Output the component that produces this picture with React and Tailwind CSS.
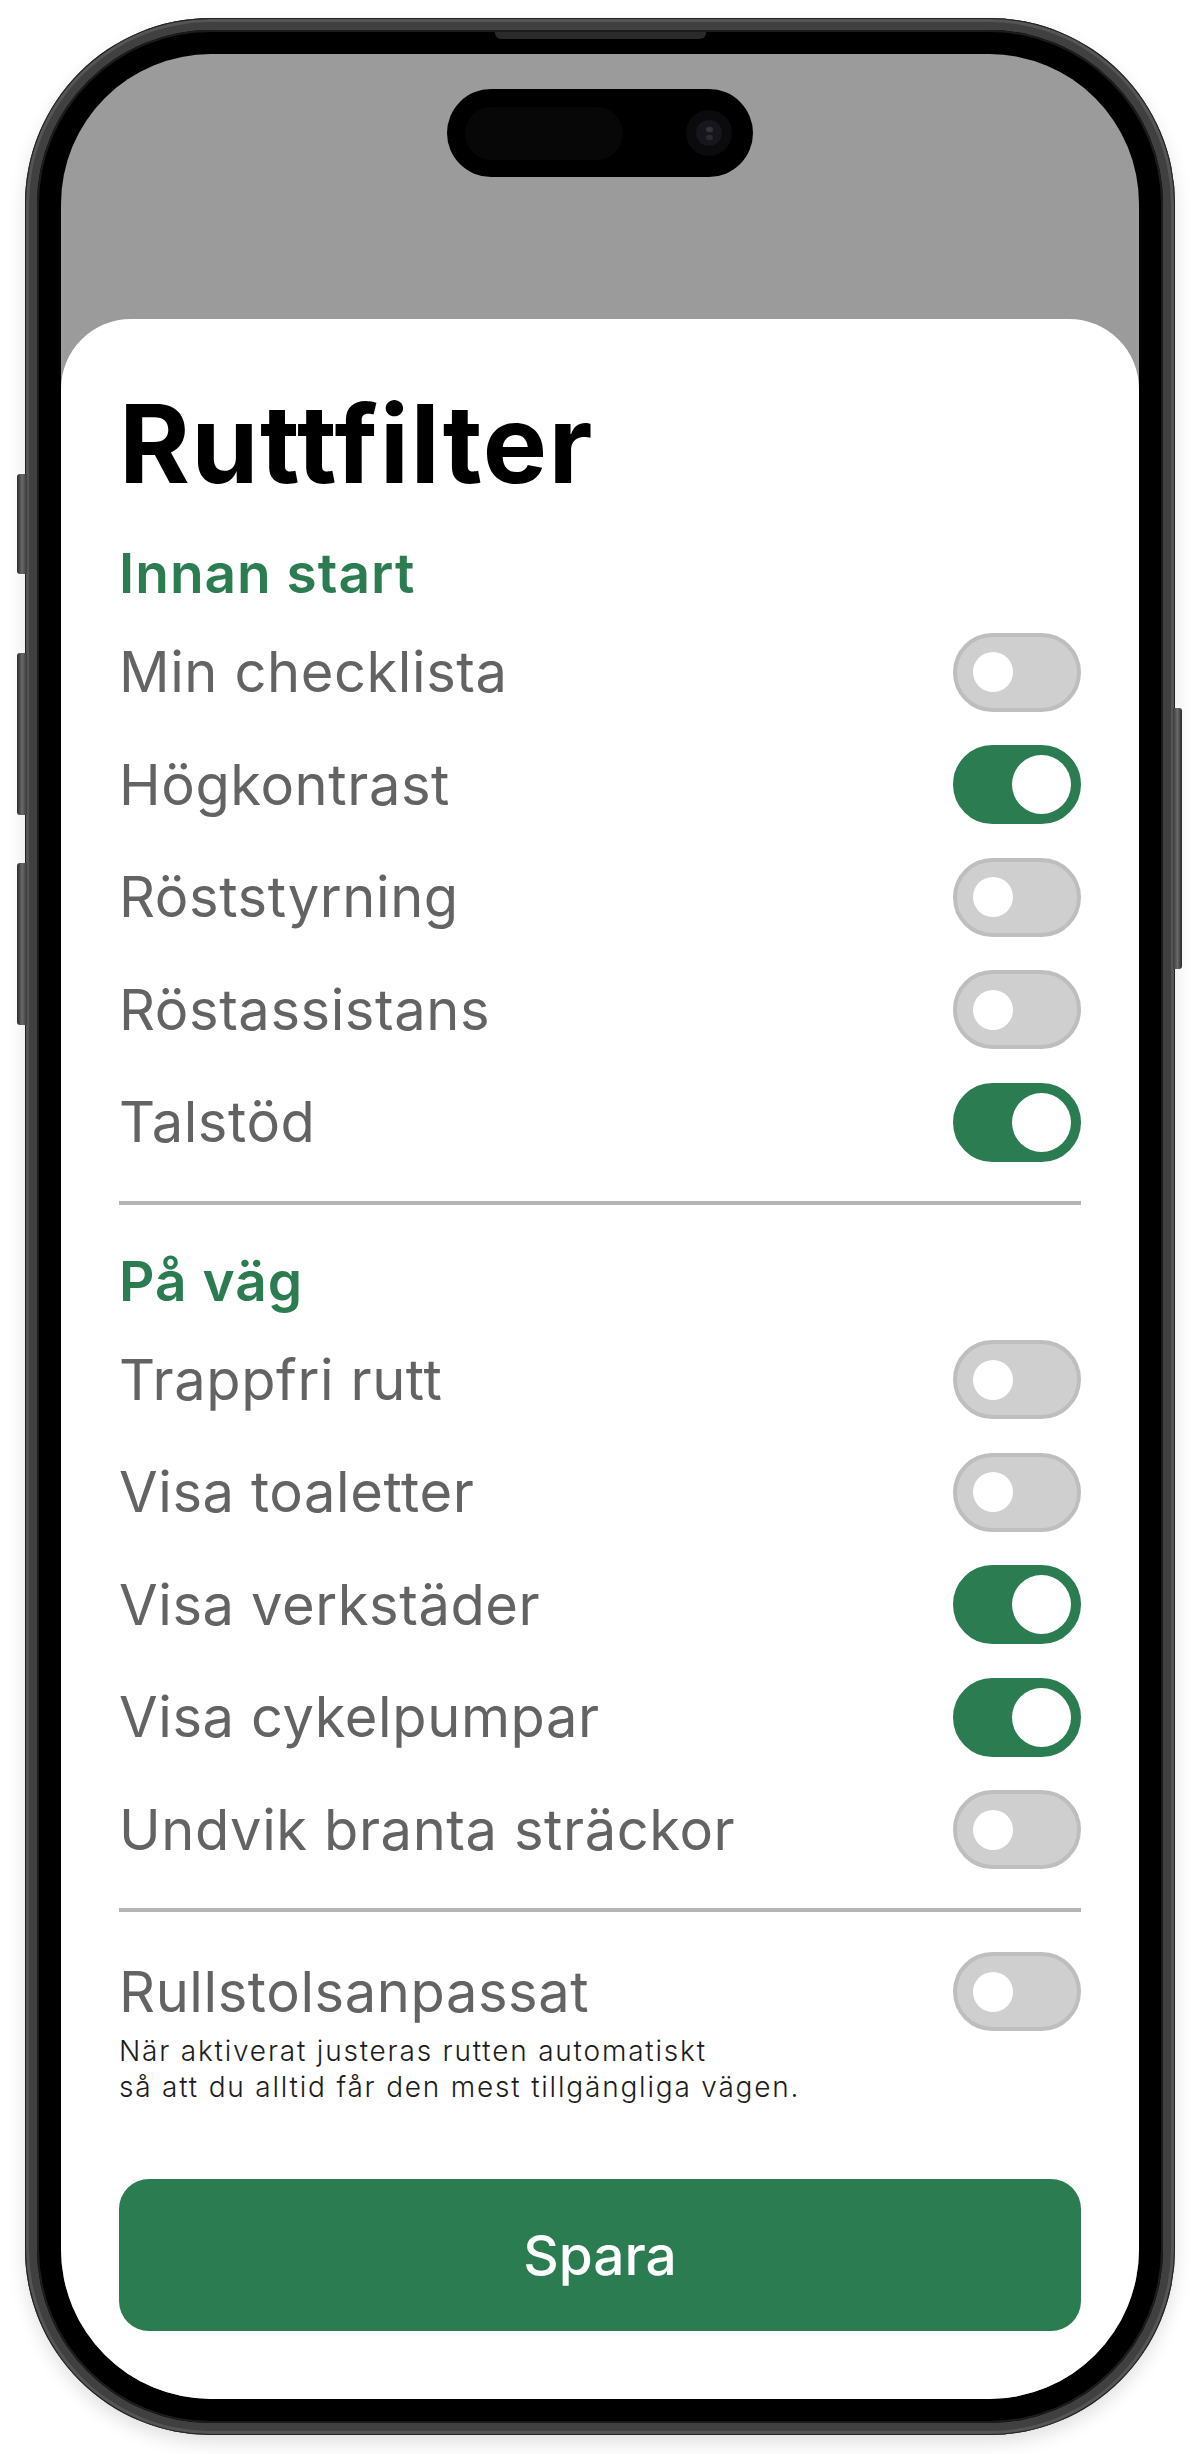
const GREEN = "#2b7d51";

const sections = [
  {
    title: "Innan start",
    rows: [
      ["Min checklista", false],
      ["Högkontrast", true],
      ["Röststyrning", false],
      ["Röstassistans", false],
      ["Talstöd", true],
    ],
  },
  {
    title: "På väg",
    rows: [
      ["Trappfri rutt", false],
      ["Visa toaletter", false],
      ["Visa verkstäder", true],
      ["Visa cykelpumpar", true],
      ["Undvik branta sträckor", false],
    ],
  },
];

function Toggle({ on }) {
  if (on) {
    return (
      <div className="flex h-[79px] w-[128px] shrink-0 items-center justify-end rounded-full border-[4px] border-[#2b7d51] bg-[#2b7d51] pr-[6px]">
        <div className="h-[59px] w-[59px] rounded-full bg-white" />
      </div>
    );
  }
  return (
    <div className="flex h-[79px] w-[128px] shrink-0 items-center rounded-full border-[4px] border-[#bebebe] bg-[#cfcfcf] pl-[16px]">
      <div className="h-[40px] w-[40px] rounded-full bg-white" />
    </div>
  );
}

function Row({ label, on }) {
  return (
    <div className="flex h-[112.5px] items-center justify-between">
      <span className="text-[56px] leading-[66px] tracking-[0.6px] text-[#636363]">{label}</span>
      <Toggle on={on} />
    </div>
  );
}

export default function App() {
  return (
    <div
      className="h-[2454px] w-[1200px] bg-white pl-[25px] pt-[18px]"
      style={{ fontFamily: "Inter, 'Noto Sans', sans-serif" }}
    >
      <div className="relative h-[2417px] w-[1150px]">
        {/* side buttons */}
        <div className="absolute left-[-8px] top-[456px] h-[100px] w-[10px] rounded-l-[3px] bg-gradient-to-r from-[#2a2a2a] via-[#6a6a6a] to-[#3a3a3a]" />
        <div className="absolute left-[-8px] top-[635px] h-[162px] w-[10px] rounded-l-[3px] bg-gradient-to-r from-[#2a2a2a] via-[#6a6a6a] to-[#3a3a3a]" />
        <div className="absolute left-[-8px] top-[845px] h-[162px] w-[10px] rounded-l-[3px] bg-gradient-to-r from-[#2a2a2a] via-[#6a6a6a] to-[#3a3a3a]" />
        <div className="absolute right-[-7px] top-[690px] h-[261px] w-[9px] rounded-r-[3px] bg-gradient-to-l from-[#2a2a2a] via-[#6a6a6a] to-[#3a3a3a]" />

        <div className="h-full w-full rounded-[186px] bg-[#404040] p-[12px] shadow-[0_8px_18px_rgba(0,0,0,0.12),inset_0_0_0_1px_#222,inset_0_0_0_4px_#555]">
          <div className="relative h-full w-full rounded-[174px] bg-black p-[24px] shadow-[inset_0_0_0_2px_#1c1c1c]">
            {/* speaker */}
            <div className="absolute left-[458px] top-[2px] h-[7px] w-[211px] rounded-b-[6px] bg-[#2a2a2a]" />

            <div className="flex h-full w-full flex-col overflow-hidden rounded-[150px] bg-[#9b9b9b]">
              <div className="flex h-[265px] shrink-0 justify-center pt-[35px]">
                <div className="flex h-[88px] w-[306px] items-center justify-between rounded-full bg-black pl-[18px] pr-[21px]">
                  <div className="h-[53px] w-[158px] rounded-full bg-[#070707]" />
                  <div className="flex h-[46px] w-[46px] items-center justify-center rounded-full bg-[#0b0b0d]">
                    <div className="flex h-[26px] w-[26px] flex-col items-center justify-center gap-[3px] rounded-full bg-[#16161c]">
                      <div className="h-[5px] w-[7px] rounded-full bg-[#34343c]" />
                      <div className="h-[5px] w-[7px] rounded-full bg-[#2a2a30]" />
                    </div>
                  </div>
                </div>
              </div>

              <div className="flex-1 rounded-t-[70px] bg-white px-[58px] pt-[71px]">
                <h1 className="text-[108px] font-bold leading-none tracking-[1.4px] text-black">Ruttfilter</h1>

                {sections.map((section, i) => (
                  <div key={section.title}>
                    <h2
                      className={
                        (i === 0 ? "mt-[42px]" : "mt-[43px]") +
                        " text-[55px] font-semibold leading-[66px] tracking-[1px] text-[#2b7d51]"
                      }
                    >
                      {section.title}
                    </h2>
                    <div className="mt-[10px]">
                      {section.rows.map(([label, on]) => (
                        <Row key={label} label={label} on={on} />
                      ))}
                    </div>
                    <div className="mt-[22px] h-[4px] bg-[#b4b4b4]" />
                  </div>
                ))}

                <div className="mt-[40px] flex h-[79px] items-center justify-between">
                  <span className="text-[56px] leading-[66px] tracking-[0.6px] text-[#636363]">Rullstolsanpassat</span>
                  <Toggle on={false} />
                </div>
                <p className="mt-[2px] text-[28px] font-light leading-[36px] tracking-[1.8px] text-[#1c1c1c]">
                  När aktiverat justeras rutten automatiskt
                  <br />
                  så att du alltid får den mest tillgängliga vägen.
                </p>

                <button
                  className="mt-[74px] flex h-[152px] w-full items-center justify-center rounded-[30px] text-[55px] font-medium text-white"
                  style={{ backgroundColor: GREEN }}
                >
                  Spara
                </button>
              </div>
            </div>
          </div>
        </div>
      </div>
    </div>
  );
}
